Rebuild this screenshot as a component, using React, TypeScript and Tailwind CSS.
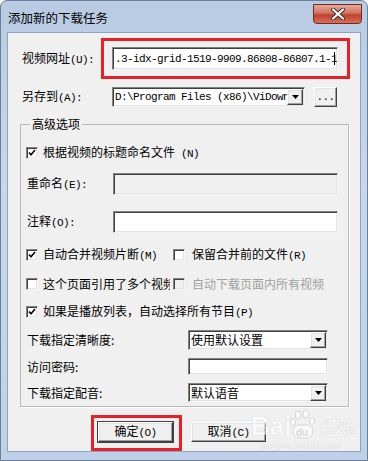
import React from "react";

const CJK = "font-['Noto_Sans_CJK_SC',sans-serif]";
const MONO = "font-['Liberation_Mono',monospace] text-[11px] tracking-[-0.6px]";

// hotkey part rendered in a narrow mono face like SimSun's half-width glyphs
const Lbl = ({ cn, key2, dim }: { cn: string; key2?: string; dim?: boolean }) => (
    <span className={`block text-[12px] leading-[14px] whitespace-nowrap ${dim ? "text-[#a0a0a0]" : "text-black"}`}>
        {cn}
        {key2 && <span className={`${MONO} leading-[14px]`}>{key2}</span>}
    </span>
);

const sunken =
    "border-t border-l border-b border-r border-t-[#828282] border-l-[#828282] border-b-[#f4f4f4] border-r-[#f4f4f4] shadow-[inset_1px_1px_0_#404040,inset_-1px_-1px_0_#e3e3e3]";

const raised =
    "border border-t-white border-l-white border-b-[#404040] border-r-[#404040] shadow-[inset_-1px_-1px_0_#a0a0a0,inset_1px_1px_0_#e3e3e3]";

const Arrow = () => (
    <div className={`w-[16px] h-[16px] shrink-0 bg-[#f0f0f0] flex items-center justify-center ${raised}`}>
        <svg width="7" height="4" viewBox="0 0 7 4">
            <path d="M0 0h7L3.5 4z" fill="#000" />
        </svg>
    </div>
);

const Combo = ({ text, w, h, mono }: { text: string; w: string; h: string; mono?: boolean }) => (
    <div className={`${w} ${h} bg-white flex items-center pl-[2px] pr-[1px] ${sunken}`}>
        <div className={`flex-1 overflow-hidden whitespace-nowrap ${mono ? MONO : "text-[12px]"} leading-[14px] text-black`}>
            {text}
        </div>
        <Arrow />
    </div>
);

const Check = ({ on, disabled }: { on?: boolean; disabled?: boolean }) => (
    <div
        className={`w-[12px] h-[12px] shrink-0 flex items-center justify-center ${
            disabled ? "bg-[#f0f0f0]" : "bg-white"
        } border border-t-[#828282] border-l-[#828282] border-b-[#f4f4f4] border-r-[#f4f4f4] shadow-[inset_1px_1px_0_#404040,inset_-1px_-1px_0_#e3e3e3]`}
    >
        {on && (
            <svg width="8" height="8" viewBox="0 0 8 8">
                <path d="M1 3.5l2 2.2L7 1" stroke="#000" strokeWidth="1.6" fill="none" />
            </svg>
        )}
    </div>
);

export default function App() {
    return (
        <div className={`w-[368px] h-[461px] ${CJK} text-[12px] leading-[14px] bg-[linear-gradient(180deg,#b9cbe2_0%,#c7d8ee_40%,#bed1e8_100%)] border border-[#6a7f99] rounded-t-[7px] flex flex-col overflow-hidden`}>
            {/* title bar */}
            <div className="h-[31px] shrink-0 flex items-start">
                <div className="pl-[7px] pt-[10px] text-[12.5px] leading-[14px] text-black">添加新的下载任务</div>
                <div className="ml-auto mr-[5px] mt-[3px] w-[49px] h-[20px] rounded-b-[4px] border border-[#6e2b22] bg-[linear-gradient(180deg,#e8a898_0%,#d27461_45%,#c0402b_55%,#d9705a_100%)] flex items-center justify-center">
                    <svg width="16" height="12" viewBox="0 0 16 12">
                        <path d="M3 1.5l10 9M13 1.5l-10 9" stroke="#3a2a2a" strokeWidth="4" strokeLinecap="round" />
                        <path d="M3 1.5l10 9M13 1.5l-10 9" stroke="#fff" strokeWidth="2.2" strokeLinecap="round" />
                    </svg>
                </div>
            </div>

            {/* client */}
            <div className="relative mx-[6px] mb-[8px] flex-1 bg-[#f0f0f0] border border-[#8ea3bd] flex flex-col">
                {/* url */}
                <div className="flex items-center h-[23px] mt-[14px] pl-[14px]">
                    <div className="w-[90px]">
                        <Lbl cn="视频网址" key2="(U):" />
                    </div>
                    <div className="relative">
                        <div className={`w-[226px] h-[23px] bg-white flex items-center pl-[2px] overflow-hidden ${sunken}`}>
                            <span className={`${MONO} leading-[14px] whitespace-nowrap text-black`}>
                                .3-idx-grid-1519-9909.86808-86807.1-1
                            </span>
                            <span className="w-px h-[13px] bg-black -ml-[3px]" />
                        </div>
                        <div className="absolute -left-[11px] -top-[9px] w-[249px] h-[41px] border-[3px] border-[#e8202a]" />
                    </div>
                </div>

                {/* save to */}
                <div className="flex items-center h-[20px] mt-[17px] pl-[14px]">
                    <div className="w-[90px]">
                        <Lbl cn="另存到" key2="(A):" />
                    </div>
                    <Combo text="D:\Program Files (x86)\ViDownloader" w="w-[193px]" h="h-[20px]" mono />
                    <div className={`ml-[9px] w-[23px] h-[20px] bg-[#f0f0f0] flex items-center justify-center ${MONO} text-black ${raised}`}>
                        ...
                    </div>
                </div>

                {/* advanced group */}
                <fieldset className="mt-[10px] ml-[12px] w-[329px] border border-[#b8b8b8] shadow-[1px_1px_0_#fff] pl-[5px] pb-[4px]">
                    <legend className="ml-[4px] px-[2px] text-[12px] leading-[14px] text-black">高级选项</legend>

                    <div className="flex items-center gap-[5px] h-[20px] mt-[12px]">
                        <Check on />
                        <Lbl cn="根据视频的标题命名文件" key2=" (N)" />
                    </div>

                    <div className="flex items-center h-[22px] mt-[10px] pl-[1px]">
                        <div className="w-[86px]">
                            <Lbl cn="重命名" key2="(E):" />
                        </div>
                        <div className={`w-[225px] h-[22px] bg-[#f0f0f0] ${sunken}`} />
                    </div>

                    <div className="flex items-center h-[22px] mt-[16px] pl-[1px]">
                        <div className="w-[86px]">
                            <Lbl cn="注释" key2="(O):" />
                        </div>
                        <div className={`w-[225px] h-[22px] bg-white ${sunken}`} />
                    </div>

                    <div className="flex items-center h-[20px] mt-[12px]">
                        <div className="w-[147px] flex items-center gap-[5px]">
                            <Check on />
                            <Lbl cn="自动合并视频片断" key2="(M)" />
                        </div>
                        <div className="flex items-center gap-[7px]">
                            <Check />
                            <Lbl cn="保留合并前的文件" key2="(R)" />
                        </div>
                    </div>

                    <div className="flex items-center h-[20px] mt-[9px]">
                        <div className="w-[147px] flex items-center gap-[5px]">
                            <Check />
                            <div className="w-[127px] overflow-hidden">
                                <Lbl cn="这个页面引用了多个视频" />
                            </div>
                        </div>
                        <div className="flex items-center gap-[7px]">
                            <Check disabled />
                            <Lbl cn="自动下载页面内所有视频" dim />
                        </div>
                    </div>

                    <div className="flex items-center gap-[5px] h-[20px] mt-[8px]">
                        <Check on />
                        <Lbl cn="如果是播放列表，自动选择所有节目" key2="(P)" />
                    </div>

                    <div className="flex items-center h-[20px] mt-[8px] pl-[1px]">
                        <div className="w-[161px]">
                            <Lbl cn="下载指定清晰度:" />
                        </div>
                        <Combo text="使用默认设置" w="w-[140px]" h="h-[20px]" />
                    </div>

                    <div className="flex items-center h-[17px] mt-[8px] pl-[1px]">
                        <div className="w-[161px]">
                            <Lbl cn="访问密码:" />
                        </div>
                        <div className={`w-[140px] h-[17px] bg-white ${sunken}`} />
                    </div>

                    <div className="flex items-center h-[19px] mt-[8px] pl-[1px]">
                        <div className="w-[161px]">
                            <Lbl cn="下载指定配音:" />
                        </div>
                        <Combo text="默认语音" w="w-[140px]" h="h-[19px]" />
                    </div>
                </fieldset>

                {/* buttons */}
                <div className="flex mt-[15px] pl-[90px] gap-[18px]">
                    <div className="relative">
                        <div className={`w-[75px] h-[20px] bg-[#f0f0f0] flex items-center justify-center outline outline-1 outline-[#404040] ${raised}`}>
                            <Lbl cn="确定" key2="(O)" />
                        </div>
                        <div className="absolute -left-[7px] -top-[7px] w-[91px] h-[36px] border-[3px] border-[#e8202a]" />
                    </div>
                    <div className={`w-[75px] h-[20px] bg-[#f0f0f0] flex items-center justify-center ${raised}`}>
                        <Lbl cn="取消" key2="(C)" />
                    </div>
                </div>

                {/* watermark */}
                <div className="absolute left-[243px] top-[376px] pointer-events-none opacity-60 select-none">
                    <div className="flex items-end">
                        <span className="font-['Liberation_Sans',sans-serif] font-bold text-[26px] leading-[26px] text-white [text-shadow:0_0_1px_#b0b0b0]">Bai</span>
                        <svg width="30" height="30" viewBox="0 0 30 30" className="-ml-[2px]">
                            <g fill="#fff" stroke="#b8b8b8" strokeWidth="0.8">
                                <ellipse cx="9" cy="6" rx="3" ry="4" />
                                <ellipse cx="17" cy="5" rx="3" ry="4" />
                                <ellipse cx="4" cy="13" rx="2.6" ry="3.4" />
                                <ellipse cx="23" cy="12" rx="2.6" ry="3.4" />
                                <rect x="4" y="16" width="20" height="13" rx="6" />
                            </g>
                            <text x="7" y="27" fontSize="10" fontWeight="bold" fill="#c8c8c8" fontFamily="Liberation Sans">du</text>
                        </svg>
                        <span className="ml-[1px] text-[18px] leading-[24px] text-white [text-shadow:0_0_1px_#a0a0a0]">经验</span>
                    </div>
                    <div className="ml-[8px] font-['Liberation_Serif',serif] text-[11px] leading-[12px] text-white [text-shadow:0_0_1px_#a0a0a0]">
                        jingyan.baidu.com
                    </div>
                </div>
            </div>
        </div>
    );
}
